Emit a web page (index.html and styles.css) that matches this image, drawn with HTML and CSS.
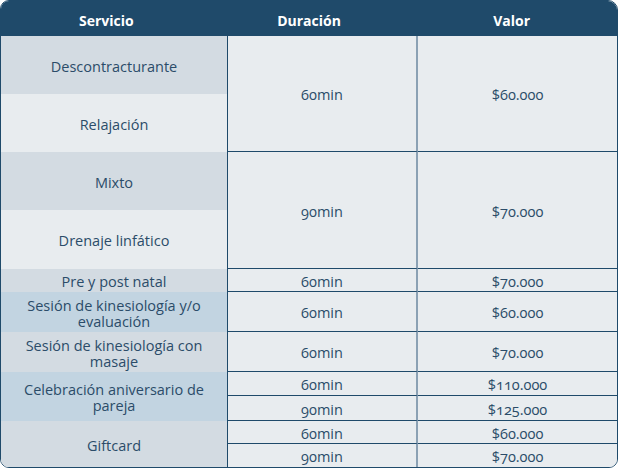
FILE: index.html
```html
<!DOCTYPE html>
<html lang="es">
<head>
<meta charset="utf-8">
<link rel="stylesheet" href="styles.css">
</head>
<body>
<div class="table">
  <div class="head">
    <div class="hcell">Servicio</div>
    <div class="hcell">Duración</div>
    <div class="hcell">Valor</div>
  </div>
  <div class="body">
    <div class="svc gray r2">Descontracturante</div>
    <div class="svc light r3">Relajación</div>
    <div class="svc gray r4">Mixto</div>
    <div class="svc light r5">Drenaje linfático</div>
    <div class="svc gray r6">Pre y post natal</div>
    <div class="svc blue r7">Sesión de kinesiología y/o evaluación</div>
    <div class="svc gray r8">Sesión de kinesiología con masaje</div>
    <div class="svc blue r9-10">Celebración aniversario de pareja</div>
    <div class="svc gray r11-12">Giftcard</div>

    <div class="dur r2-3">60min</div><div class="val r2-3">$60.000</div>
    <div class="dur r4-5">90min</div><div class="val r4-5">$70.000</div>
    <div class="dur r6">60min</div><div class="val r6">$70.000</div>
    <div class="dur r7">60min</div><div class="val r7">$60.000</div>
    <div class="dur r8">60min</div><div class="val r8">$70.000</div>
    <div class="dur r9">60min</div><div class="val r9">$110.000</div>
    <div class="dur r10">90min</div><div class="val r10">$125.000</div>
    <div class="dur r11">60min</div><div class="val r11">$60.000</div>
    <div class="dur r12">90min</div><div class="val r12">$70.000</div>
  </div>
</div>
</body>
</html>
```

FILE: styles.css
```css
html, body {
  margin: 0;
  padding: 0;
}
body {
  width: 618px;
  height: 468px;
  font-family: "Open Sans", "Noto Sans", sans-serif;
  font-feature-settings: "onum" 1;
  font-size: 14.5px;
  color: #2b4c69;
  background: #ffffff;
}
.table {
  box-sizing: border-box;
  width: 618px;
  height: 468px;
  border: 1px solid #1f4a6a;
  border-radius: 9px 10px 9px 9px;
  overflow: hidden;
  display: flex;
  flex-direction: column;
}
.head {
  height: 35px;
  flex: none;
  background: #1f4a6a;
  color: #ffffff;
  font-weight: 700;
  font-size: 14px;
  display: grid;
  grid-template-columns: 1fr 1fr 1fr;
  padding: 0 4px 0 4px;
  align-items: center;
}
.hcell {
  text-align: center;
  padding-top: 3px;
}
.body {
  flex: 1;
  display: grid;
  grid-template-columns: 227px 190px 199px;
  grid-template-rows: 58px 58px 58px 59px 23px 40px 40px 24px 25px 23px 23px;
  background: #e8ecef;
}
.body > div {
  box-sizing: border-box;
  display: flex;
  align-items: center;
  justify-content: center;
  text-align: center;
  line-height: 16px;
  padding-top: 3px;
}
.svc {
  grid-column: 1;
  border-right: 1px solid #1f4a6a;
  padding-left: 12px;
  padding-right: 12px;
}
.dur {
  grid-column: 2;
  border-right: 2px solid #8ba1b4;
  border-bottom: 1px solid #1f4a6a;
}
.val {
  grid-column: 3;
  border-bottom: 1px solid #1f4a6a;
}
.r12.dur, .r12.val { border-bottom: 0; }
.gray { background: #d3dbe2; }
.light { background: #e8ecef; }
.blue { background: #c2d4e1; }

.r2 { grid-row: 1; }
.r3 { grid-row: 2; }
.r4 { grid-row: 3; }
.r5 { grid-row: 4; }
.r6 { grid-row: 5; }
.r7 { grid-row: 6; }
.r8 { grid-row: 7; }
.r9 { grid-row: 8; }
.r10 { grid-row: 9; }
.r11 { grid-row: 10; }
.r12 { grid-row: 11; }
.r2-3 { grid-row: 1 / 3; }
.r4-5 { grid-row: 3 / 5; }
.r9-10 { grid-row: 8 / 10; }
.r11-12 { grid-row: 10 / 12; }
```
